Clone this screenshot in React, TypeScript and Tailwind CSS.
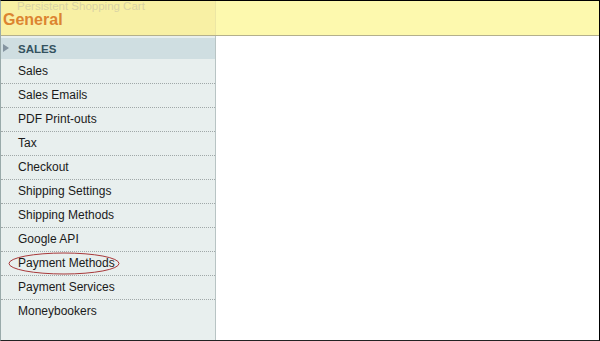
import React from "react";

const items = [
  "Sales",
  "Sales Emails",
  "PDF Print-outs",
  "Tax",
  "Checkout",
  "Shipping Settings",
  "Shipping Methods",
  "Google API",
  "Payment Methods",
  "Payment Services",
  "Moneybookers",
];

export default function App() {
  return (
    <div
      className="w-[600px] h-[341px] overflow-hidden flex flex-col border-t border-r border-b border-t-black border-r-black border-b-[#222] border-l border-l-[#9aa]"
      style={{ fontFamily: '"Liberation Sans", Arial, sans-serif' }}
    >
      {/* header */}
      <div className="h-[35px] flex shrink-0 border-b border-[#b4b08c]">
        <div className="w-[214px] bg-[#f8f0a4] flex flex-col overflow-hidden">
          <div className="pl-[16px] text-[11.5px] leading-[12px] -mt-[1px] text-[#d9d3a4] whitespace-nowrap">
            Persistent Shopping Cart
          </div>
          <div className="pl-[2px] text-[16px] leading-[18px] font-bold text-[#dc8430] -mt-[1px]">
            General
          </div>
        </div>
        <div className="flex-1 bg-[#fdf9ae] border-l border-[#ece6a4]" />
      </div>
      {/* body */}
      <div className="flex flex-1 min-h-0">
        <div className="w-[215px] bg-[#e8efee] border-r border-[#b8c4c4] flex flex-col pt-[2px]">
          <div className="h-[21px] bg-[#cfdee1] flex items-center relative">
            <svg className="absolute left-[2px] top-[6px]" width="6" height="8" viewBox="0 0 6 8">
              <path d="M0 0 L6 4 L0 8 Z" fill="#8494a0" />
            </svg>
            <span className="pl-[17px] text-[11.5px] font-bold text-[#34525f] leading-[20px]">
              SALES
            </span>
          </div>
          <div className="h-[1px]" />
          {items.map((label, i) => (
            <div
              key={label}
              className={
                "h-[24px] relative flex items-start " +
                (i < items.length - 1 ? "border-b border-dotted border-[#a0a8a8]" : "")
              }
            >
              <span className="pl-[17px] text-[12px] leading-[22px] text-[#1a1a1a] whitespace-nowrap">
                {label}
              </span>
              {label === "Payment Methods" && (
                <svg
                  className="absolute left-[7px] top-[0px]"
                  width="112"
                  height="24"
                  viewBox="0 0 112 24"
                >
                  <ellipse cx="56" cy="11.5" rx="55" ry="10.5" fill="none" stroke="#a8383a" strokeWidth="1" />
                </svg>
              )}
            </div>
          ))}
        </div>
        <div className="flex-1 bg-white" />
      </div>
    </div>
  );
}
